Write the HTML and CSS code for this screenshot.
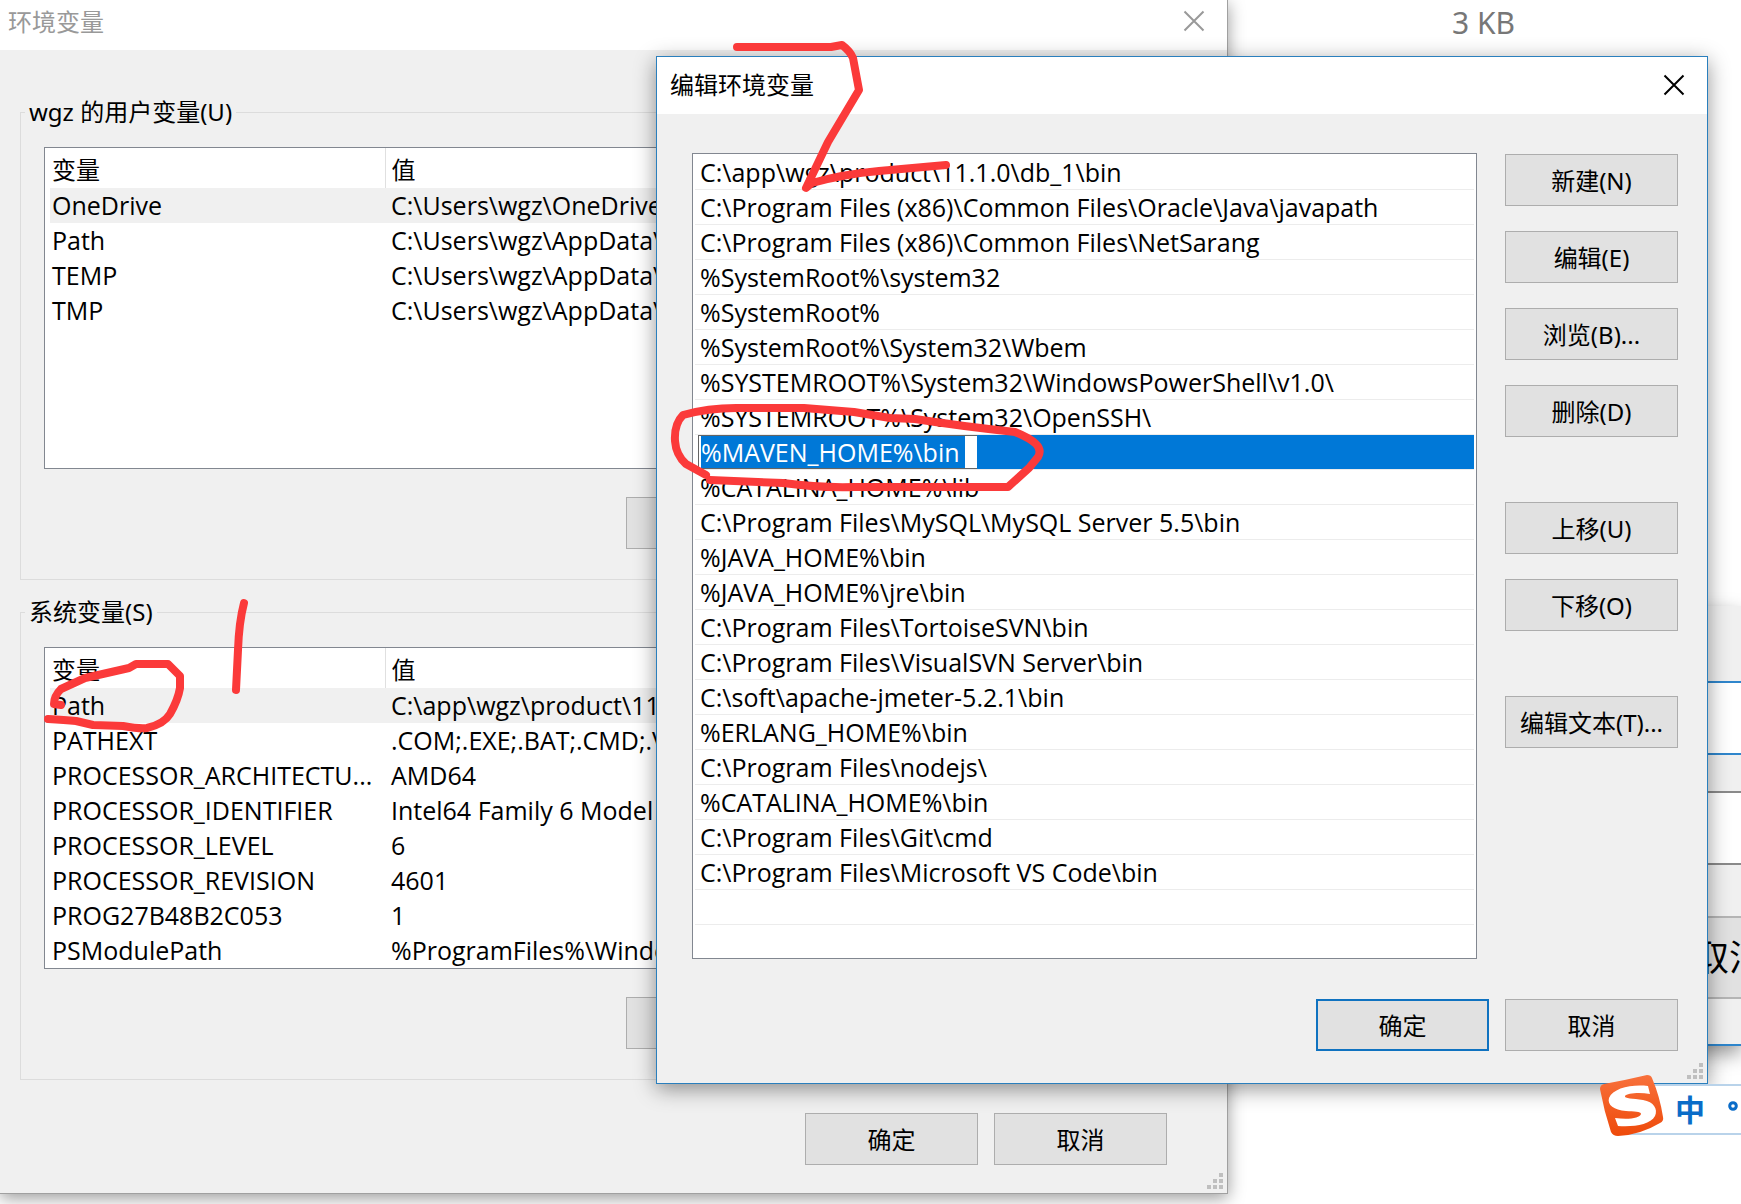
FILE: index.html
```html
<!DOCTYPE html>
<html lang="zh-CN">
<head>
<meta charset="utf-8">
<meta name="viewport" content="width=device-width, initial-scale=1">
<title>环境变量</title>
<link rel="stylesheet" href="styles.css">
</head>
<body>
<main class="desktop">
  <p class="file-size">3 KB</p>

  <section class="window back-panel">
    <div class="panel-field panel-field-active"></div>
    <div class="panel-field"></div>
    <button type="button" class="panel-button">取消</button>
  </section>

  <section class="window variables-window">
    <header class="title-bar title-bar-inactive">
      <h1 class="title">环境变量</h1>
      <button type="button" class="close" aria-label="关闭">
        <svg class="close-icon" viewBox="0 0 22 22"><path d="M1.5 1.5l19 19M20.5 1.5l-19 19"/></svg>
      </button>
    </header>
    <div class="variables-body">
      <fieldset class="group">
        <legend class="group-title">wgz 的用户变量(U)</legend>
        <div class="group-body">
          <div class="list-frame">
            <table class="variables">
              <thead><tr><th class="name">变量</th><th>值</th></tr></thead>
              <tbody>
                <tr class="marked"><td>OneDrive</td><td>C:\Users\wgz\OneDrive</td></tr>
                <tr><td>Path</td><td>C:\Users\wgz\AppData\</td></tr>
                <tr><td>TEMP</td><td>C:\Users\wgz\AppData\</td></tr>
                <tr><td>TMP</td><td>C:\Users\wgz\AppData\</td></tr>
              </tbody>
            </table>
          </div>
          <div class="actions group-actions">
            <button type="button" class="button" aria-label="新建"></button>
            <button type="button" class="button" aria-label="编辑"></button>
            <button type="button" class="button" aria-label="删除"></button>
          </div>
        </div>
      </fieldset>
      <fieldset class="group">
        <legend class="group-title">系统变量(S)</legend>
        <div class="group-body">
          <div class="list-frame">
            <table class="variables">
              <thead><tr><th class="name">变量</th><th>值</th></tr></thead>
              <tbody>
                <tr class="marked"><td>Path</td><td>C:\app\wgz\product\11</td></tr>
                <tr><td>PATHEXT</td><td>.COM;.EXE;.BAT;.CMD;.V</td></tr>
                <tr><td>PROCESSOR_ARCHITECTU...</td><td>AMD64</td></tr>
                <tr><td>PROCESSOR_IDENTIFIER</td><td>Intel64 Family 6 Model</td></tr>
                <tr><td>PROCESSOR_LEVEL</td><td>6</td></tr>
                <tr><td>PROCESSOR_REVISION</td><td>4601</td></tr>
                <tr><td>PROG27B48B2C053</td><td>1</td></tr>
                <tr><td>PSModulePath</td><td>%ProgramFiles%\Windo</td></tr>
              </tbody>
            </table>
          </div>
          <div class="actions group-actions">
            <button type="button" class="button" aria-label="新建"></button>
            <button type="button" class="button" aria-label="编辑"></button>
            <button type="button" class="button" aria-label="删除"></button>
          </div>
        </div>
      </fieldset>
      <div class="actions window-actions">
        <button type="button" class="button">确定</button>
        <button type="button" class="button">取消</button>
      </div>
    </div>
    <svg class="grip" viewBox="0 0 17 17"><path d="M12 0h4v4h-4zM6 6h4v4h-4zM12 6h4v4h-4zM0 12h4v4h-4zM6 12h4v4h-4zM12 12h4v4h-4z"/></svg>
  </section>

  <section class="window edit-window">
    <header class="title-bar">
      <h2 class="title">编辑环境变量</h2>
      <button type="button" class="close" aria-label="关闭">
        <svg class="close-icon" viewBox="0 0 22 22"><path d="M1.5 1.5l19 19M20.5 1.5l-19 19"/></svg>
      </button>
    </header>
    <div class="edit-body">
      <div class="edit-main">
        <ul class="paths">
          <li>C:\app\wgz\product\11.1.0\db_1\bin</li>
          <li>C:\Program Files (x86)\Common Files\Oracle\Java\javapath</li>
          <li>C:\Program Files (x86)\Common Files\NetSarang</li>
          <li>%SystemRoot%\system32</li>
          <li>%SystemRoot%</li>
          <li>%SystemRoot%\System32\Wbem</li>
          <li>%SYSTEMROOT%\System32\WindowsPowerShell\v1.0\</li>
          <li>%SYSTEMROOT%\System32\OpenSSH\</li>
          <li class="selected"><input class="path-input" type="text" aria-label="路径" value="%MAVEN_HOME%\bin"></li>
          <li>%CATALINA_HOME%\lib</li>
          <li>C:\Program Files\MySQL\MySQL Server 5.5\bin</li>
          <li>%JAVA_HOME%\bin</li>
          <li>%JAVA_HOME%\jre\bin</li>
          <li>C:\Program Files\TortoiseSVN\bin</li>
          <li>C:\Program Files\VisualSVN Server\bin</li>
          <li>C:\soft\apache-jmeter-5.2.1\bin</li>
          <li>%ERLANG_HOME%\bin</li>
          <li>C:\Program Files\nodejs\</li>
          <li>%CATALINA_HOME%\bin</li>
          <li>C:\Program Files\Git\cmd</li>
          <li>C:\Program Files\Microsoft VS Code\bin</li>
          <li></li>
        </ul>
        <div class="side-buttons">
          <button type="button" class="button">新建(N)</button>
          <button type="button" class="button">编辑(E)</button>
          <button type="button" class="button">浏览(B)...</button>
          <button type="button" class="button">删除(D)</button>
          <button type="button" class="button section-start">上移(U)</button>
          <button type="button" class="button">下移(O)</button>
          <button type="button" class="button section-start">编辑文本(T)...</button>
        </div>
      </div>
      <div class="actions edit-actions">
        <button type="button" class="button button-default">确定</button>
        <button type="button" class="button">取消</button>
      </div>
    </div>
    <svg class="grip" viewBox="0 0 17 17"><path d="M12 0h4v4h-4zM6 6h4v4h-4zM12 6h4v4h-4zM0 12h4v4h-4zM6 12h4v4h-4zM12 12h4v4h-4z"/></svg>
  </section>

  <aside class="ime-bar">
    <svg class="ime-logo" viewBox="0 0 64 62">
      <defs><linearGradient id="flame" x1="0" y1="0" x2="0" y2="1"><stop offset="0" stop-color="#f8713c"/><stop offset="1" stop-color="#ee4a0a"/></linearGradient></defs>
      <path fill="url(#flame)" d="M4 9Q26 5 47 0Q51 0 52 3Q60 22 63 42Q64 46 60 48Q40 60 18 61Q13 61 11 57Q4 36 0 14Q0 10 4 9Z"/>
      <path fill="#fff" d="M48 11L50 19C40 17 27 18 25 21C24 24 33 23 43 25C54 27 58 34 55 41C50 50 34 52 18 51L15 43C29 45 40 43 41 39C41 36 34 37 26 36C14 35 7 30 9 23C13 13 32 9 48 11Z"/>
    </svg>
    <span class="ime-mode">中</span>
    <svg class="ime-punctuation" viewBox="0 0 10 10"><circle cx="5" cy="5" r="3.3"/></svg>
  </aside>

  <svg class="ink" aria-hidden="true">
    <path d="M737 47H831L842 45Q850 51 853 58L859 90L828 142L806 188L812 183Q844 174 879 171L946 165"/>
    <path d="M706 475L686 464Q676 455 675 441Q674 424 683 415Q708 408 736 408H804L854 412L890 418L915 419Q960 426 1015 432Q1030 438 1036 444Q1042 450 1038 457L1029 468L1008 487H854Q820 488 783 483L710 480"/>
    <path d="M244 603Q239 622 238 650L236 690"/>
    <path d="M48 719Q65 720 76 721L93 725L123 726Q140 729 147 728Q164 724 170 714Q178 700 180 688V676L168 664H136L129 668L85 678L61 689Q54 696 54 704L61 705"/>
  </svg>
</main>
</body>
</html>
```
FILE: styles.css
```css
* {
  box-sizing: border-box;
}

body {
  margin: 0;
  background: #fff;
  color: #000;
  font: 24px/35px "Noto Sans", "Noto Sans CJK SC", sans-serif;
}

h1, h2, p, ul, fieldset {
  margin: 0;
  padding: 0;
}

button, input {
  font: inherit;
  color: inherit;
}

.desktop {
  position: relative;
  min-height: 100vh;
  overflow: hidden;
}

.window {
  position: absolute;
  background: #f0f0f0;
}

.file-size {
  position: absolute;
  top: 5px;
  right: 226px;
  color: #777;
  font-size: 30px;
}

/* Window partly hidden at the right edge */
.back-panel {
  top: 606px;
  right: 0;
  width: 240px;
  padding-top: 75px;
  padding-bottom: 45px;
  border-bottom: 2px solid #2f86cc;
  box-shadow: 0 8px 18px rgba(0, 0, 0, 0.4);
}

.panel-field {
  height: 74px;
  margin-bottom: 51px;
  background: #fff;
  border-block: 2px solid #8a8a8a;
}

.panel-field-active {
  margin-bottom: 36px;
  border-color: #2f86cc;
}

.panel-button {
  display: block;
  width: 100%;
  height: 83px;
  padding: 0 0 0 192px;
  overflow: hidden;
  background: #e1e1e1;
  border: solid #b5b5b5;
  border-width: 2px 0;
  font-size: 36px;
  text-align: left;
  white-space: nowrap;
}

/* Title bars */
.title-bar {
  display: flex;
  align-items: center;
  justify-content: space-between;
  height: 57px;
  padding: 0 22px 2px 13px;
  background: #fff;
}

.title-bar-inactive {
  height: 50px;
  padding: 0 22px 8px 8px;
  color: #999;
}

.title {
  font-size: 24px;
  font-weight: 400;
}

.close {
  display: flex;
  padding: 0;
  background: none;
  border: 0;
}

.close-icon {
  width: 22px;
  height: 22px;
  fill: none;
  stroke: currentColor;
  stroke-width: 2;
}

/* Variables window */
.variables-window {
  top: 0;
  left: 0;
  right: 513px;
  border: solid #a0a0a0;
  border-width: 0 1px 1px 0;
  box-shadow: 0 4px 16px rgba(0, 0, 0, 0.4);
}

.variables-body {
  display: flex;
  flex-direction: column;
  gap: 16px;
  padding: 46px 26px 28px 20px;
}

.group {
  min-width: 0;
  padding: 0 4px;
  border: 1px solid #dcdcdc;
}

.group-title {
  padding: 0 4px;
  line-height: 32px;
}

.group-body {
  padding: 19px 19px 30px;
}

.list-frame {
  height: 322px;
  padding-left: 5px;
  overflow: hidden;
  background: #fff;
  border: 1px solid #828790;
}

.variables {
  width: 100%;
  table-layout: fixed;
  border-collapse: collapse;
}

.variables th {
  height: 40px;
  padding: 3px 0 0 6px;
  font-weight: 400;
  text-align: left;
}

.variables .name {
  width: 335px;
  padding-left: 2px;
  border-right: 1px solid #e0e0e0;
}

.variables td {
  height: 35px;
  padding: 0 0 0 6px;
  overflow: hidden;
  white-space: nowrap;
}

.variables td,
.paths {
  font-family: "Open Sans", "Noto Sans CJK SC", sans-serif;
  font-size: 25px;
}

.variables td:first-child {
  padding-left: 2px;
}

.marked {
  background: #f0f0f0;
}

/* Buttons */
.actions {
  display: flex;
  justify-content: flex-end;
  gap: 16px;
}

.group-actions {
  margin-top: 28px;
}

.window-actions {
  margin: 17px 34px 0 0;
}

.button {
  width: 173px;
  height: 52px;
  padding: 0;
  background: #e1e1e1;
  border: 1px solid #adadad;
  white-space: nowrap;
}

.button-default {
  border: 2px solid #0f72c0;
}

/* Edit dialog */
.edit-window {
  top: 56px;
  left: 656px;
  right: 33px;
  border: 1px solid #2a7fbd;
  box-shadow: 0 5px 20px rgba(0, 0, 0, 0.42);
}

.edit-body {
  padding: 39px 29px 32px 35px;
}

.edit-main {
  display: flex;
  gap: 28px;
}

.paths {
  flex: 1;
  min-width: 0;
  min-height: 806px;
  padding: 1px 2px;
  background: #fff;
  border: 1px solid #828790;
  list-style: none;
}

.paths li {
  height: 35px;
  padding-left: 5px;
  overflow: hidden;
  border-bottom: 1px solid #ececec;
  white-space: nowrap;
}

.paths .selected {
  margin-left: 3px;
  padding: 0;
  background: #0078d7;
}

.path-input {
  display: block;
  width: 279px;
  height: 34px;
  padding: 0 0 0 2px;
  background: linear-gradient(#0078d7, #0078d7) 2px 0 / 264px 100% no-repeat #fff;
  border: 1px solid #646464;
  border-right: 0;
  border-radius: 0;
  outline: 0;
  color: #fff;
}

.side-buttons {
  display: flex;
  flex-direction: column;
  gap: 25px;
  padding-top: 1px;
}

.section-start {
  margin-top: 40px;
}

.edit-actions {
  margin-top: 40px;
}

.grip {
  position: absolute;
  right: 3px;
  bottom: 3px;
  width: 17px;
  height: 17px;
  fill: #bfbfbf;
}

/* Input method bar */
.ime-bar {
  position: absolute;
  top: 1084px;
  right: 0;
  display: flex;
  align-items: center;
  gap: 11px;
  width: 121px;
  height: 51px;
  background: #fff;
  border: solid #b9d3ea;
  border-width: 2px 0;
}

.ime-logo {
  flex: none;
  width: 64px;
  height: 62px;
  margin: -8px 0 0 -20px;
}

.ime-mode {
  color: #0a6cc8;
  font-size: 30px;
  font-weight: 700;
}

.ime-punctuation {
  flex: none;
  width: 10px;
  height: 10px;
  margin: -8px 0 0 12px;
  fill: none;
  stroke: #0a6cc8;
  stroke-width: 3;
}

/* Red pen marks */
.ink {
  position: absolute;
  inset: 0;
  width: 100%;
  height: 100%;
  fill: none;
  stroke: #fb3a3a;
  stroke-width: 8;
  stroke-linecap: round;
  stroke-linejoin: round;
  pointer-events: none;
}
```
